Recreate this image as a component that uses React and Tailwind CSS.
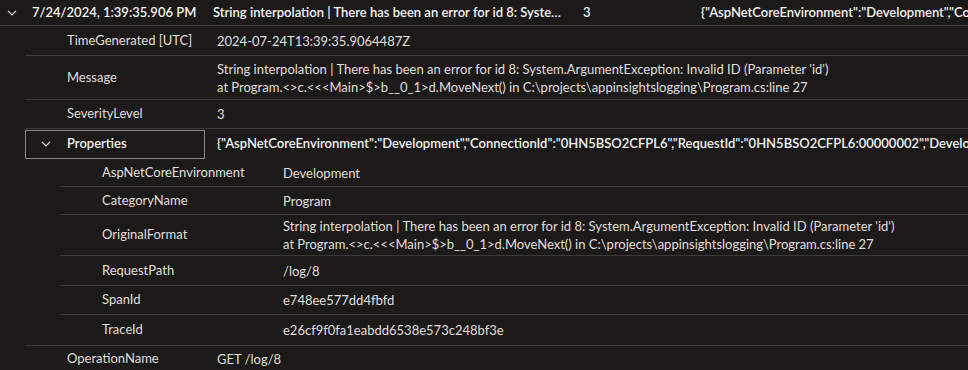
import React from "react";

const font = { fontFamily: '"Segoe UI", Lato, "Noto Sans", sans-serif' };

const Chevron = ({ className }) => (
  <svg width="10" height="6" viewBox="0 0 10 6" className={className} fill="none">
    <path d="M1 0.8 L5 4.8 L9 0.8" stroke="#e1dfdd" strokeWidth="1.2" />
  </svg>
);

const details = [
  { label: "TimeGenerated [UTC]", value: ["2024-07-24T13:39:35.9064487Z"], h: "h-[30px]" },
  {
    label: "Message",
    value: [
      "String interpolation | There has been an error for id 8: System.ArgumentException: Invalid ID (Parameter 'id')",
      "at Program.<>c.<<<Main>$>b__0_1>d.MoveNext() in C:\\projects\\appinsightslogging\\Program.cs:line 27",
    ],
    h: "h-[44px]",
  },
  { label: "SeverityLevel", value: ["3"], h: "h-[29px]" },
];

const props = [
  { label: "AspNetCoreEnvironment", value: ["Development"], h: "h-[28px]" },
  { label: "CategoryName", value: ["Program"], h: "h-[28px]" },
  {
    label: "OriginalFormat",
    value: [
      "String interpolation | There has been an error for id 8: System.ArgumentException: Invalid ID (Parameter 'id')",
      "at Program.<>c.<<<Main>$>b__0_1>d.MoveNext() in C:\\projects\\appinsightslogging\\Program.cs:line 27",
    ],
    h: "h-[41px]",
  },
  { label: "RequestPath", value: ["/log/8"], h: "h-[30px]" },
  { label: "SpanId", value: ["e748ee577dd4fbfd"], h: "h-[29px]" },
  { label: "TraceId", value: ["e26cf9f0fa1eabdd6538e573c248bf3e"], h: "h-[30px]" },
];

const propsJson =
  '{"AspNetCoreEnvironment":"Development","ConnectionId":"0HN5BSO2CFPL6","RequestId":"0HN5BSO2CFPL6:00000002","DevelopmentEnvironment":"true"}';

const Row = ({ label, value, h, labelW, last }) => (
  <div className={`flex items-center ${h} ${last ? "" : "border-b border-[#3b3a39]"}`}>
    <div className={`${labelW} shrink-0 pl-[42px] whitespace-nowrap`}>{label}</div>
    <div className="leading-[18px] whitespace-nowrap">
      {value.map((line, i) => (
        <div key={i}>{line}</div>
      ))}
    </div>
  </div>
);

export default function App() {
  return (
    <div
      style={font}
      className="w-[968px] h-[370px] overflow-hidden bg-[#1b1a19] text-[13px] text-[#e1dfdd]"
    >
      <div className="flex items-center h-[26px] border-b border-[#3b3a39] whitespace-nowrap font-semibold text-[#f3f2f1]">
        <div className="w-[32px] shrink-0 pl-[7px]">
          <Chevron />
        </div>
        <div className="w-[181px] shrink-0">7/24/2024, 1:39:35.906 PM</div>
        <div className="w-[370px] shrink-0 truncate pr-[22px]">
          String interpolation | There has been an error for id 8: System.ArgumentException: Invalid ID
        </div>
        <div className="w-[118px] shrink-0">3</div>
        <div className="overflow-hidden">{propsJson}</div>
      </div>

      <div className="ml-[25px]">
        {details.map((d) => (
          <Row key={d.label} {...d} labelW="w-[192px]" />
        ))}

        <div className="border-b border-[#3b3a39]">
          <div className="flex items-center h-[30px] whitespace-nowrap">
            <div className="w-[180px] h-[29px] shrink-0 flex items-center border border-[#8a8886] font-semibold text-[#f3f2f1]">
              <Chevron className="ml-[15px] mr-[16px]" />
              Properties
            </div>
            <div className="pl-[12px] font-semibold text-[#f3f2f1]">{propsJson}</div>
          </div>
          <div className="ml-[35px]">
            {props.map((p, i) => (
              <Row key={p.label} {...p} labelW="w-[223px]" last={i === props.length - 1} />
            ))}
          </div>
        </div>

        <Row label="OperationName" value={["GET /log/8"]} h="h-[26px]" labelW="w-[192px]" last />
      </div>
    </div>
  );
}
